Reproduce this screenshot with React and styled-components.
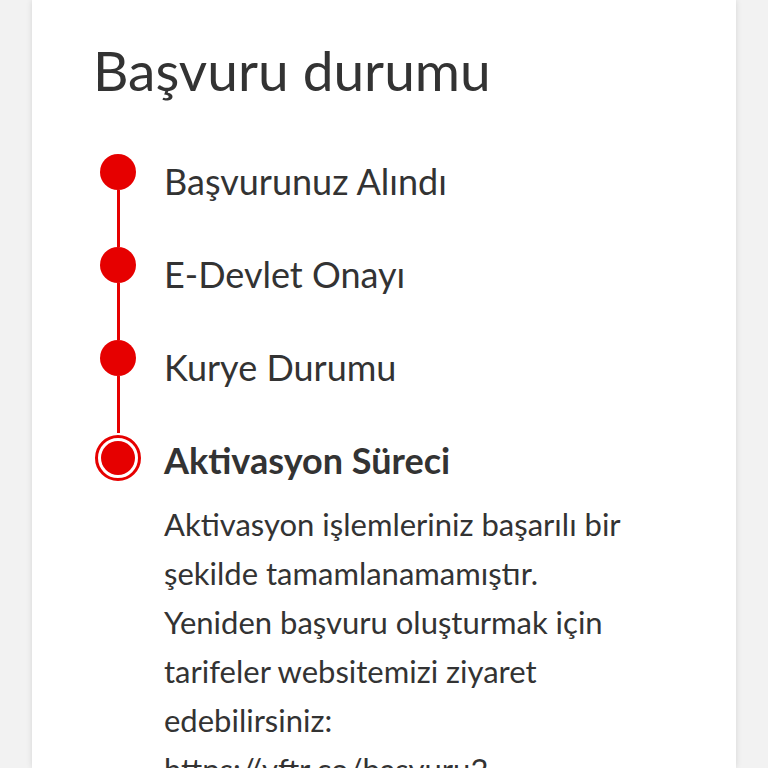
import React from 'react';
import styled, { createGlobalStyle } from 'styled-components';

const GlobalStyle = createGlobalStyle`
  html, body {
    margin: 0;
    padding: 0;
    background: #f2f2f2;
    overflow: hidden;
  }
  body {
    font-family: Lato, "Open Sans", "DejaVu Sans", sans-serif;
    color: #333333;
  }
`;

const Page = styled.div`
  padding: 0 32px;
  height: 768px;
`;

const Card = styled.section`
  background: #ffffff;
  height: 100%;
  padding: 37px 90px 0 63px;
  box-shadow: 0 0 6px rgba(0, 0, 0, 0.12);
  box-sizing: border-box;
`;

const Title = styled.h1`
  margin: 0 0 51px -2px;
  font-size: 55px;
  line-height: 1.2;
  font-weight: 400;
  color: #333333;
`;

const Steps = styled.ol`
  list-style: none;
  margin: 0;
  padding: 0;
`;

const Step = styled.li`
  display: grid;
  grid-template-columns: 46px 1fr;
  column-gap: 23px;
  min-height: ${p => (p.$last ? 'auto' : '93px')};
`;

const Marker = styled.div`
  display: flex;
  flex-direction: column;
  align-items: center;
`;

const Dot = styled.span`
  flex: none;
  width: 36px;
  height: 36px;
  border-radius: 50%;
  background: #e60000;
`;

const Ring = styled.span`
  flex: none;
  width: 46px;
  height: 46px;
  box-sizing: border-box;
  border-radius: 50%;
  border: 3px solid #e60000;
  padding: 3px;
  margin-top: 2px;
  &::after {
    content: '';
    display: block;
    width: 100%;
    height: 100%;
    border-radius: 50%;
    background: #e60000;
  }
`;

const Line = styled.span`
  flex: 1;
  width: 3px;
  background: #e60000;
`;

const Body = styled.div`
  padding-top: 6px;
  min-width: 0;
`;

const Label = styled.div`
  font-size: 36px;
  line-height: 1.2;
  font-weight: ${p => (p.$current ? 700 : 400)};
  color: #333333;
`;

const Description = styled.p`
  margin: 18px 0 0;
  font-size: 31px;
  line-height: 49px;
  color: #333333;
  overflow-wrap: anywhere;
`;

const steps = [
  { label: 'Başvurunuz Alındı' },
  { label: 'E-Devlet Onayı' },
  { label: 'Kurye Durumu' },
  {
    label: 'Aktivasyon Süreci',
    current: true,
    text: 'Aktivasyon işlemleriniz başarılı bir şekilde tamamlanamamıştır. Yeniden başvuru oluşturmak için tarifeler websitemizi ziyaret edebilirsiniz: https://vftr.co/basvuru2',
  },
];

export default function App() {
  return (
    <>
      <GlobalStyle />
      <Page>
        <Card>
          <Title>Başvuru durumu</Title>
          <Steps>
            {steps.map((s, i) => {
              const last = i === steps.length - 1;
              return (
                <Step key={s.label} $last={last}>
                  <Marker>
                    {s.current ? <Ring /> : <Dot />}
                    {!last && <Line />}
                  </Marker>
                  <Body>
                    <Label $current={s.current}>{s.label}</Label>
                    {s.text && <Description>{s.text}</Description>}
                  </Body>
                </Step>
              );
            })}
          </Steps>
        </Card>
      </Page>
    </>
  );
}
